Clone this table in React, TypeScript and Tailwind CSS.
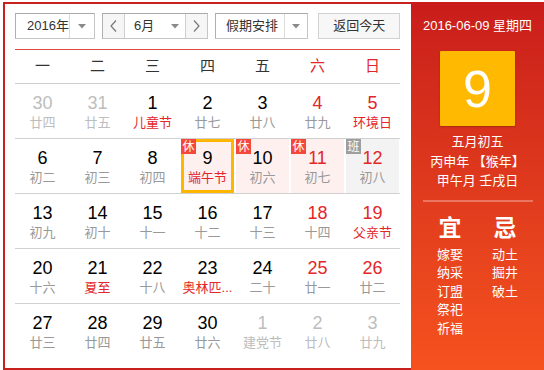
import React from 'react';

type Day = {
  d: number;
  l: string;
  dim?: boolean;
  red?: boolean;
  fest?: boolean;
  badge?: '休' | '班';
  bg?: 'pink' | 'gray';
  sel?: boolean;
};

const WEEK = ['一', '二', '三', '四', '五', '六', '日'];

const ROWS: Day[][] = [
  [
    { d: 30, l: '廿四', dim: true },
    { d: 31, l: '廿五', dim: true },
    { d: 1, l: '儿童节', fest: true },
    { d: 2, l: '廿七' },
    { d: 3, l: '廿八' },
    { d: 4, l: '廿九', red: true },
    { d: 5, l: '环境日', red: true, fest: true },
  ],
  [
    { d: 6, l: '初二' },
    { d: 7, l: '初三' },
    { d: 8, l: '初四' },
    { d: 9, l: '端午节', fest: true, badge: '休', bg: 'pink', sel: true },
    { d: 10, l: '初六', badge: '休', bg: 'pink' },
    { d: 11, l: '初七', red: true, badge: '休', bg: 'pink' },
    { d: 12, l: '初八', red: true, badge: '班', bg: 'gray' },
  ],
  [
    { d: 13, l: '初九' },
    { d: 14, l: '初十' },
    { d: 15, l: '十一' },
    { d: 16, l: '十二' },
    { d: 17, l: '十三' },
    { d: 18, l: '十四', red: true },
    { d: 19, l: '父亲节', red: true, fest: true },
  ],
  [
    { d: 20, l: '十六' },
    { d: 21, l: '夏至', fest: true },
    { d: 22, l: '十八' },
    { d: 23, l: '奥林匹...', fest: true },
    { d: 24, l: '二十' },
    { d: 25, l: '廿一', red: true },
    { d: 26, l: '廿二', red: true },
  ],
  [
    { d: 27, l: '廿三' },
    { d: 28, l: '廿四' },
    { d: 29, l: '廿五' },
    { d: 30, l: '廿六' },
    { d: 1, l: '建党节', dim: true },
    { d: 2, l: '廿八', dim: true },
    { d: 3, l: '廿九', dim: true },
  ],
];

const YI = ['嫁娶', '纳采', '订盟', '祭祀', '祈福'];
const JI = ['动土', '掘井', '破土'];

const Caret = () => (
  <svg width="8" height="5" viewBox="0 0 8 5">
    <path d="M0 0h8L4 4.5z" fill="#8a8a8a" />
  </svg>
);

const Chevron = ({ dir }: { dir: 'l' | 'r' }) => (
  <svg width="7" height="12" viewBox="0 0 7 12">
    <path
      d={dir === 'l' ? 'M6 0.5L1 6l5 5.5' : 'M1 0.5L6 6l-5 5.5'}
      fill="none"
      stroke="#777"
      strokeWidth="1.2"
    />
  </svg>
);

const DayCell = ({ day }: { day: Day }) => {
  const numColor = day.dim ? 'text-[#bdbdbd]' : day.red ? 'text-[#e3262a]' : 'text-black';
  const lunarColor = day.dim ? 'text-[#bdbdbd]' : day.fest ? 'text-[#e3262a]' : 'text-[#999]';
  const bg = day.bg === 'pink' ? 'bg-[#fdf0ef]' : day.bg === 'gray' ? 'bg-[#f3f3f3]' : '';
  return (
    <div className="h-full pl-[1px] pr-[1px]">
      <div
        className={`relative h-full flex flex-col items-center ${bg} ${
          day.sel ? 'border-[3px] border-[#ffb600] pt-[6px]' : 'pt-[9px]'
        }`}
      >
        {day.badge && (
          <span
            className={`absolute ${day.sel ? '-left-[3px] -top-[3px]' : 'left-0 top-0'} w-[15px] h-[15px] flex items-center justify-center text-[12px] leading-none text-white ${
              day.badge === '休' ? 'bg-[#f5473a]' : 'bg-[#9e9e9e]'
            }`}
          >
            {day.badge}
          </span>
        )}
        <div className={`text-[18px] leading-[20px] ${numColor}`}>{day.d}</div>
        <div className={`mt-[2px] text-[13px] leading-[16px] whitespace-nowrap ${lunarColor}`}>{day.l}</div>
      </div>
    </div>
  );
};

export default function App() {
  return (
    <div className="w-[544px] h-[370px] pl-[3px] pt-[2px] bg-white overflow-hidden font-[family-name:'Liberation_Sans','Noto_Sans_CJK_SC',sans-serif]">
      <div className="flex h-[368px] border-2 border-r-0 border-[#c8201c]">
        {/* calendar */}
        <div className="w-[406px] pl-[10px] pr-[11px] pt-[9px]">
          <div className="flex h-[26px] text-[13px] text-[#333] whitespace-nowrap">
            <div className="flex w-[80px] border border-[#c6c6c6] border-t-[#a9a9a9] border-l-[#b0b0b0]">
              <div className="flex-1 flex items-center pl-[11px]">2016年</div>
              <div className="w-[25px] flex items-center justify-center border-l border-[#dcdcdc]">
                <Caret />
              </div>
            </div>
            <div className="ml-[7px] flex border border-[#c6c6c6] border-t-[#a9a9a9] border-l-[#b0b0b0]">
              <div className="w-[22px] flex items-center justify-center bg-[#f6f6f6] border-r border-[#cfcfcf]">
                <Chevron dir="l" />
              </div>
              <div className="w-[60px] flex items-center pl-[9px]">
                <span>6月</span>
                <span className="ml-[17px] flex">
                  <Caret />
                </span>
              </div>
              <div className="w-[22px] flex items-center justify-center bg-[#f6f6f6] border-l border-[#cfcfcf]">
                <Chevron dir="r" />
              </div>
            </div>
            <div className="ml-[7px] flex w-[94px] border border-[#c6c6c6] border-t-[#a9a9a9] border-l-[#b0b0b0]">
              <div className="flex-1 flex items-center pl-[10px]">假期安排</div>
              <div className="w-[23px] flex items-center justify-center border-l border-[#dcdcdc]">
                <Caret />
              </div>
            </div>
            <button className="ml-[10px] w-[82px] flex items-center justify-center bg-[#f7f7f7] border border-[#d2d2d2] text-[#333]">
              返回今天
            </button>
          </div>

          <div className="mt-[10px] h-px bg-[#e4473f]" />

          <div className="grid grid-cols-7 h-[34px] border-b border-[#cfcfcf] text-[15px]">
            {WEEK.map((w, i) => (
              <div
                key={w}
                className={`flex items-center justify-center ${i >= 5 ? 'text-[#e3262a]' : 'text-[#333]'}`}
              >
                {w}
              </div>
            ))}
          </div>

          {ROWS.map((row, r) => (
            <div
              key={r}
              className={`grid grid-cols-7 h-[55px] ${r < ROWS.length - 1 ? 'border-b border-[#d0d0d0]' : ''}`}
            >
              {row.map((day, i) => (
                <DayCell key={i} day={day} />
              ))}
            </div>
          ))}
        </div>

        {/* today panel */}
        <div className="flex-1 -my-[2px] bg-linear-to-b from-[#c91c1b] to-[#f5521f] text-white flex flex-col items-center">
          <div className="mt-[15px] text-[13px] leading-[18px]">2016-06-09 星期四</div>
          <div className="mt-[16px] w-[75px] h-[75px] bg-[#ffb900] rounded-[1px] shadow-[0_1px_2px_rgba(120,30,0,0.45)] flex items-center justify-center">
            <span className="text-[52px] leading-none">9</span>
          </div>
          <div className="mt-[6px] text-[13px] leading-[19.5px] text-center">
            <div>五月初五</div>
            <div>丙申年 【猴年】</div>
            <div>甲午月 壬戌日</div>
          </div>
          <div className="mt-[9px] w-[110px] h-[2px] bg-white/30" />
          <div className="mt-[12px] flex w-[110px] text-[13px] leading-[18.5px]">
            <div className="w-[55px] flex flex-col items-center">
              <div className="text-[23px] leading-[28px] font-bold mb-[4px]">宜</div>
              {YI.map((t) => (
                <div key={t}>{t}</div>
              ))}
            </div>
            <div className="w-[55px] flex flex-col items-center">
              <div className="text-[23px] leading-[28px] font-bold mb-[4px]">忌</div>
              {JI.map((t) => (
                <div key={t}>{t}</div>
              ))}
            </div>
          </div>
        </div>
      </div>
    </div>
  );
}
